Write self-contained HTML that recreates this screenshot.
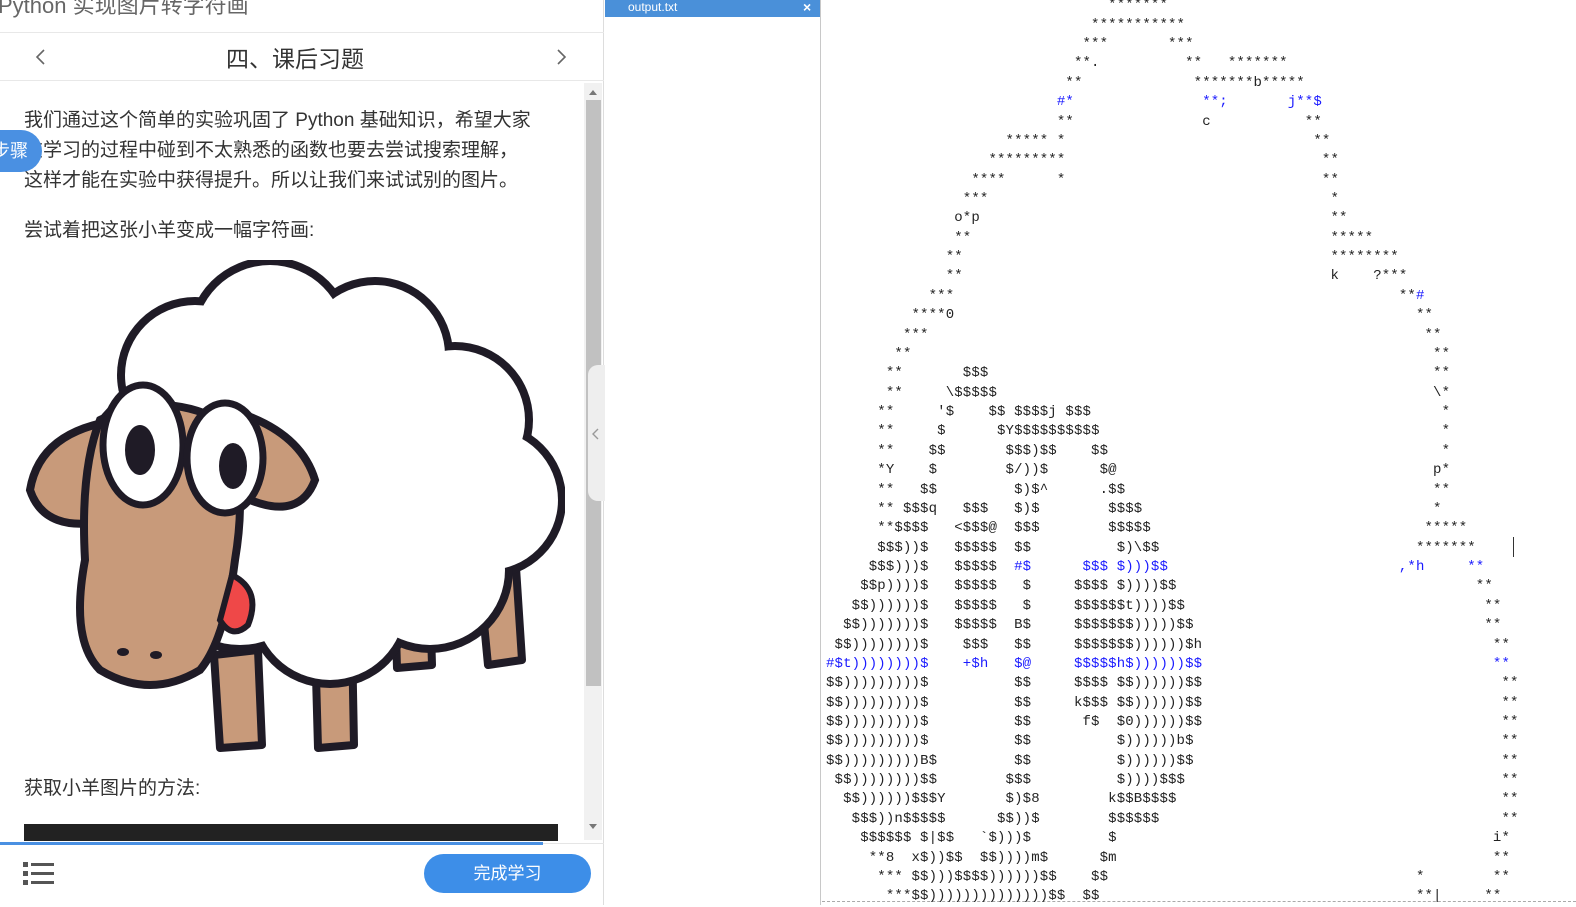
<!DOCTYPE html>
<html><head><meta charset="utf-8">
<style>
*{margin:0;padding:0;box-sizing:border-box}
html,body{width:1576px;height:905px;overflow:hidden;background:#fff;font-family:"Liberation Sans","Noto Sans CJK SC",sans-serif}
#left{position:absolute;left:0;top:0;width:604px;height:905px;background:#fff;border-right:1px solid #ddd}
.t{position:absolute;white-space:nowrap}
#mid{position:absolute;left:605px;top:0;width:216px;height:905px;background:#fff;border-right:1px solid #c8c8c8}
#art{position:absolute;left:0;top:0;width:1576px;height:905px;pointer-events:none}
#art b{position:absolute;font:14px/19.37px "Liberation Mono","DejaVu Sans Mono",monospace;font-weight:normal;letter-spacing:0.15px;white-space:pre;color:#222;left:calc(826px + var(--c)*8.55px);top:calc(var(--r)*19.37px - 3.7px)}
#art b.u{color:#1a1aff}
p.x{position:absolute;left:24px;font-size:19px;color:#333;line-height:30px;white-space:nowrap}
</style></head><body>
<div id="left">
  <div class="t" style="left:-2px;top:-12px;font-size:22px;color:#666">Python 实现图片转字符画</div>
  <div style="position:absolute;left:0;top:32px;width:604px;height:1px;background:#e8e8e8"></div>
  <div style="position:absolute;left:0;top:80px;width:604px;height:1px;background:#e8e8e8"></div>
  <svg style="position:absolute;left:34px;top:48px" width="14" height="18"><path d="M10 2 L3 9 L10 16" stroke="#666" stroke-width="1.6" fill="none"/></svg>
  <svg style="position:absolute;left:554px;top:48px" width="14" height="18"><path d="M4 2 L11 9 L4 16" stroke="#666" stroke-width="1.6" fill="none"/></svg>
  <div class="t" style="left:226px;top:40px;font-size:23px;color:#333">四、课后习题</div>
  <p class="x" style="top:106px">我们通过这个简单的实验巩固了 Python 基础知识，希望大家<br>在学习的过程中碰到不太熟悉的函数也要去尝试搜索理解，<br>这样才能在实验中获得提升。所以让我们来试试别的图片。</p>
  <p class="x" style="top:216px">尝试着把这张小羊变成一幅字符画:</p>
  <p class="x" style="top:774px">获取小羊图片的方法:</p>
  <div style="position:absolute;left:0;top:130px;width:42px;height:42px;background:#4a90e2;border-radius:0 21px 21px 0;color:#fff;font-size:18px;line-height:42px;overflow:hidden"><span style="margin-left:-8px">步骤</span></div>
  <svg style="position:absolute;left:20px;top:260px" width="545" height="500" viewBox="20 260 545 500">
    <g fill="#c89a7a" stroke="#1f1b26" stroke-width="8" stroke-linejoin="round">
      <path d="M214 655 L258 650 L262 745 L220 748 Z"/>
      <path d="M315 640 L352 638 L354 745 L318 748 Z"/>
      <path d="M395 600 L430 598 L432 665 L397 668 Z"/>
      <path d="M478 560 L515 552 L522 660 L488 665 Z"/>
    </g>
    <g fill="#1f1b26">
      <circle cx="270" cy="340" r="83"/><circle cx="195" cy="375" r="78"/><circle cx="375" cy="355" r="78"/>
      <circle cx="455" cy="420" r="78"/><circle cx="488" cy="500" r="78"/><circle cx="430" cy="570" r="83"/>
      <circle cx="330" cy="605" r="83"/><circle cx="240" cy="565" r="88"/><circle cx="170" cy="470" r="88"/>
    </g>
    <g fill="#fff">
      <circle cx="270" cy="340" r="75"/><circle cx="195" cy="375" r="70"/><circle cx="375" cy="355" r="70"/>
      <circle cx="455" cy="420" r="70"/><circle cx="488" cy="500" r="70"/><circle cx="430" cy="570" r="75"/>
      <circle cx="330" cy="605" r="75"/><circle cx="240" cy="565" r="80"/><circle cx="170" cy="470" r="80"/>
      <circle cx="340" cy="470" r="110"/><circle cx="260" cy="450" r="100"/>
    </g>
    <g fill="#c89a7a" stroke="#1f1b26" stroke-width="8">
      <path d="M120 420 Q40 430 30 490 Q45 535 110 520 Z"/>
      <path d="M230 410 Q300 430 315 480 Q300 520 250 500 Z"/>
      <path d="M100 420 Q160 390 220 420 Q250 470 235 560 Q225 640 200 670 Q150 700 100 670 Q70 640 85 560 Q80 470 100 420 Z"/>
    </g>
    <path d="M232 575 Q262 590 248 625 Q232 640 220 620 Z" fill="#ef4848" stroke="#1f1b26" stroke-width="6"/>
    <g stroke="#1f1b26" stroke-width="7" fill="#fff">
      <ellipse cx="143" cy="445" rx="40" ry="60"/><ellipse cx="225" cy="458" rx="38" ry="55"/>
    </g>
    <ellipse cx="140" cy="450" rx="15" ry="25" fill="#1f1b26"/><ellipse cx="233" cy="466" rx="14" ry="23" fill="#1f1b26"/>
    <ellipse cx="123" cy="652" rx="6" ry="4" fill="#1f1b26"/><ellipse cx="156" cy="655" rx="6" ry="4" fill="#1f1b26"/>
  </svg>
  <div style="position:absolute;left:24px;top:824px;width:534px;height:17px;background:#222"></div>
  <div style="position:absolute;left:584px;top:83px;width:18px;height:757px;background:#f1f1f1"></div>
  <div style="position:absolute;left:586px;top:100px;width:15px;height:586px;background:#c1c1c1"></div>
  <svg style="position:absolute;left:588px;top:88px" width="10" height="8"><path d="M1 7 L5 2 L9 7Z" fill="#777"/></svg>
  <svg style="position:absolute;left:588px;top:823px" width="10" height="8"><path d="M1 1 L5 6 L9 1Z" fill="#777"/></svg>
  <div style="position:absolute;left:588px;top:365px;width:17px;height:136px;background:#eee;border-radius:10px 0 0 10px"></div>
  <svg style="position:absolute;left:591px;top:428px" width="10" height="12"><path d="M7 1 L2 6 L7 11" stroke="#999" stroke-width="1.4" fill="none"/></svg>
  <div style="position:absolute;left:0;top:843px;width:604px;height:1px;background:#e5e5e5"></div>
  <div style="position:absolute;left:0;top:842px;width:543px;height:3px;background:#4a90e2"></div>
  <svg style="position:absolute;left:23px;top:861px" width="32" height="26">
    <g fill="#555"><rect x="0" y="1" width="5" height="5"/><rect x="0" y="10" width="5" height="5"/><rect x="0" y="19" width="5" height="5"/>
    <rect x="8" y="2" width="23" height="3"/><rect x="8" y="11" width="23" height="3"/><rect x="8" y="20" width="23" height="3"/></g>
  </svg>
  <div style="position:absolute;left:424px;top:854px;width:167px;height:39px;background:#3d8ee8;border-radius:20px;color:#fff;font-size:17px;line-height:39px;text-align:center">完成学习</div>
</div>
<div id="mid">
  <div style="position:absolute;left:0;top:0;width:215px;height:17px;background:#4a90d9"></div>
  <div class="t" style="left:23px;top:0px;font-size:12px;color:#fff;line-height:15px">output.txt</div>
  <div class="t" style="left:198px;top:-1px;font-size:14px;color:#fff;font-weight:bold;line-height:16px">×</div>
</div>
<div style="position:absolute;left:822px;top:901px;width:754px;height:0;border-top:1px dashed #aaa"></div>
<div style="position:absolute;left:1513px;top:537px;width:1px;height:20px;background:#333"></div>
<div id="art">
<b style="--r:0;--c:33">*******</b>
<b style="--r:1;--c:31">***********</b>
<b style="--r:2;--c:30">***</b><b style="--r:2;--c:40">***</b>
<b style="--r:3;--c:29">**.</b><b style="--r:3;--c:42">**</b><b style="--r:3;--c:47">*******</b>
<b style="--r:4;--c:28">**</b><b style="--r:4;--c:43">*******b*****</b>
<b class="u" style="--r:5;--c:27">#*</b><b class="u" style="--r:5;--c:44">**;</b><b class="u" style="--r:5;--c:54">j**$</b>
<b style="--r:6;--c:27">**</b><b style="--r:6;--c:44">c</b><b style="--r:6;--c:56">**</b>
<b style="--r:7;--c:21">*****</b><b style="--r:7;--c:27">*</b><b style="--r:7;--c:57">**</b>
<b style="--r:8;--c:19">*********</b><b style="--r:8;--c:58">**</b>
<b style="--r:9;--c:17">****</b><b style="--r:9;--c:27">*</b><b style="--r:9;--c:58">**</b>
<b style="--r:10;--c:16">***</b><b style="--r:10;--c:59">*</b>
<b style="--r:11;--c:15">o*p</b><b style="--r:11;--c:59">**</b>
<b style="--r:12;--c:15">**</b><b style="--r:12;--c:59">*****</b>
<b style="--r:13;--c:14">**</b><b style="--r:13;--c:59">********</b>
<b style="--r:14;--c:14">**</b><b style="--r:14;--c:59">k    ?***</b>
<b style="--r:15;--c:12">***</b><b style="--r:15;--c:67">**</b><b class="u" style="--r:15;--c:69">#</b>
<b style="--r:16;--c:10">****0</b><b style="--r:16;--c:69">**</b>
<b style="--r:17;--c:9">***</b><b style="--r:17;--c:70">**</b>
<b style="--r:18;--c:8">**</b><b style="--r:18;--c:71">**</b>
<b style="--r:19;--c:7">**</b><b style="--r:19;--c:16">$$$</b><b style="--r:19;--c:71">**</b>
<b style="--r:20;--c:7">**</b><b style="--r:20;--c:14">\$$$$$</b><b style="--r:20;--c:71">\*</b>
<b style="--r:21;--c:6">**</b><b style="--r:21;--c:13">'$</b><b style="--r:21;--c:19">$$ $$$$j $$$</b><b style="--r:21;--c:72">*</b>
<b style="--r:22;--c:6">**</b><b style="--r:22;--c:13">$</b><b style="--r:22;--c:20">$Y$$$$$$$$$$</b><b style="--r:22;--c:72">*</b>
<b style="--r:23;--c:6">**</b><b style="--r:23;--c:12">$$</b><b style="--r:23;--c:21">$$$)$$</b><b style="--r:23;--c:31">$$</b><b style="--r:23;--c:72">*</b>
<b style="--r:24;--c:6">*Y</b><b style="--r:24;--c:12">$</b><b style="--r:24;--c:21">$/))$</b><b style="--r:24;--c:32">$@</b><b style="--r:24;--c:71">p*</b>
<b style="--r:25;--c:6">**</b><b style="--r:25;--c:11">$$</b><b style="--r:25;--c:22">$)$^</b><b style="--r:25;--c:32">.$$</b><b style="--r:25;--c:71">**</b>
<b style="--r:26;--c:6">** $$$q</b><b style="--r:26;--c:16">$$$</b><b style="--r:26;--c:22">$)$</b><b style="--r:26;--c:33">$$$$</b><b style="--r:26;--c:71">*</b>
<b style="--r:27;--c:6">**$$$$</b><b style="--r:27;--c:15">&lt;$$$@</b><b style="--r:27;--c:22">$$$</b><b style="--r:27;--c:33">$$$$$</b><b style="--r:27;--c:70">*****</b>
<b style="--r:28;--c:6">$$$))$</b><b style="--r:28;--c:15">$$$$$</b><b style="--r:28;--c:22">$$</b><b style="--r:28;--c:34">$)\$$</b><b style="--r:28;--c:69">*******</b>
<b style="--r:29;--c:5">$$$)))$</b><b style="--r:29;--c:15">$$$$$</b><b class="u" style="--r:29;--c:22">#$</b><b class="u" style="--r:29;--c:30">$$$ $)))$$</b><b class="u" style="--r:29;--c:67">,*h</b><b class="u" style="--r:29;--c:75">**</b>
<b style="--r:30;--c:4">$$p))))$</b><b style="--r:30;--c:15">$$$$$</b><b style="--r:30;--c:23">$</b><b style="--r:30;--c:29">$$$$ $))))$$</b><b style="--r:30;--c:76">**</b>
<b style="--r:31;--c:3">$$))))))$</b><b style="--r:31;--c:15">$$$$$</b><b style="--r:31;--c:23">$</b><b style="--r:31;--c:29">$$$$$$t))))$$</b><b style="--r:31;--c:77">**</b>
<b style="--r:32;--c:2">$$)))))))$</b><b style="--r:32;--c:15">$$$$$</b><b style="--r:32;--c:22">B$</b><b style="--r:32;--c:29">$$$$$$$)))))$$</b><b style="--r:32;--c:77">**</b>
<b style="--r:33;--c:1">$$))))))))$</b><b style="--r:33;--c:16">$$$</b><b style="--r:33;--c:22">$$</b><b style="--r:33;--c:29">$$$$$$$))))))$h</b><b style="--r:33;--c:78">**</b>
<b class="u" style="--r:34;--c:0">#$t))))))))$</b><b class="u" style="--r:34;--c:16">+$h</b><b class="u" style="--r:34;--c:22">$@</b><b class="u" style="--r:34;--c:29">$$$$$h$))))))$$</b><b class="u" style="--r:34;--c:78">**</b>
<b style="--r:35;--c:0">$$)))))))))$</b><b style="--r:35;--c:22">$$</b><b style="--r:35;--c:29">$$$$ $$))))))$$</b><b style="--r:35;--c:79">**</b>
<b style="--r:36;--c:0">$$)))))))))$</b><b style="--r:36;--c:22">$$</b><b style="--r:36;--c:29">k$$$ $$))))))$$</b><b style="--r:36;--c:79">**</b>
<b style="--r:37;--c:0">$$)))))))))$</b><b style="--r:37;--c:22">$$</b><b style="--r:37;--c:30">f$</b><b style="--r:37;--c:34">$0))))))$$</b><b style="--r:37;--c:79">**</b>
<b style="--r:38;--c:0">$$)))))))))$</b><b style="--r:38;--c:22">$$</b><b style="--r:38;--c:34">$))))))b$</b><b style="--r:38;--c:79">**</b>
<b style="--r:39;--c:0">$$)))))))))B$</b><b style="--r:39;--c:22">$$</b><b style="--r:39;--c:34">$))))))$$</b><b style="--r:39;--c:79">**</b>
<b style="--r:40;--c:1">$$))))))))$$</b><b style="--r:40;--c:21">$$$</b><b style="--r:40;--c:34">$))))$$$</b><b style="--r:40;--c:79">**</b>
<b style="--r:41;--c:2">$$))))))$$$Y</b><b style="--r:41;--c:21">$)$8</b><b style="--r:41;--c:33">k$$B$$$$</b><b style="--r:41;--c:79">**</b>
<b style="--r:42;--c:3">$$$))n$$$$$</b><b style="--r:42;--c:20">$$))$</b><b style="--r:42;--c:33">$$$$$$</b><b style="--r:42;--c:79">**</b>
<b style="--r:43;--c:4">$$$$$$ $|$$</b><b style="--r:43;--c:18">`$)))$</b><b style="--r:43;--c:33">$</b><b style="--r:43;--c:78">i*</b>
<b style="--r:44;--c:5">**8  x$))$$  $$))))m$</b><b style="--r:44;--c:32">$m</b><b style="--r:44;--c:78">**</b>
<b style="--r:45;--c:6">*** $$)))$$$$))))))$$</b><b style="--r:45;--c:31">$$</b><b style="--r:45;--c:69">*</b><b style="--r:45;--c:78">**</b>
<b style="--r:46;--c:7">***$$))))))))))))))$$</b><b style="--r:46;--c:30">$$</b><b style="--r:46;--c:69">**|</b><b style="--r:46;--c:77">**</b>
</div>
</body></html>
